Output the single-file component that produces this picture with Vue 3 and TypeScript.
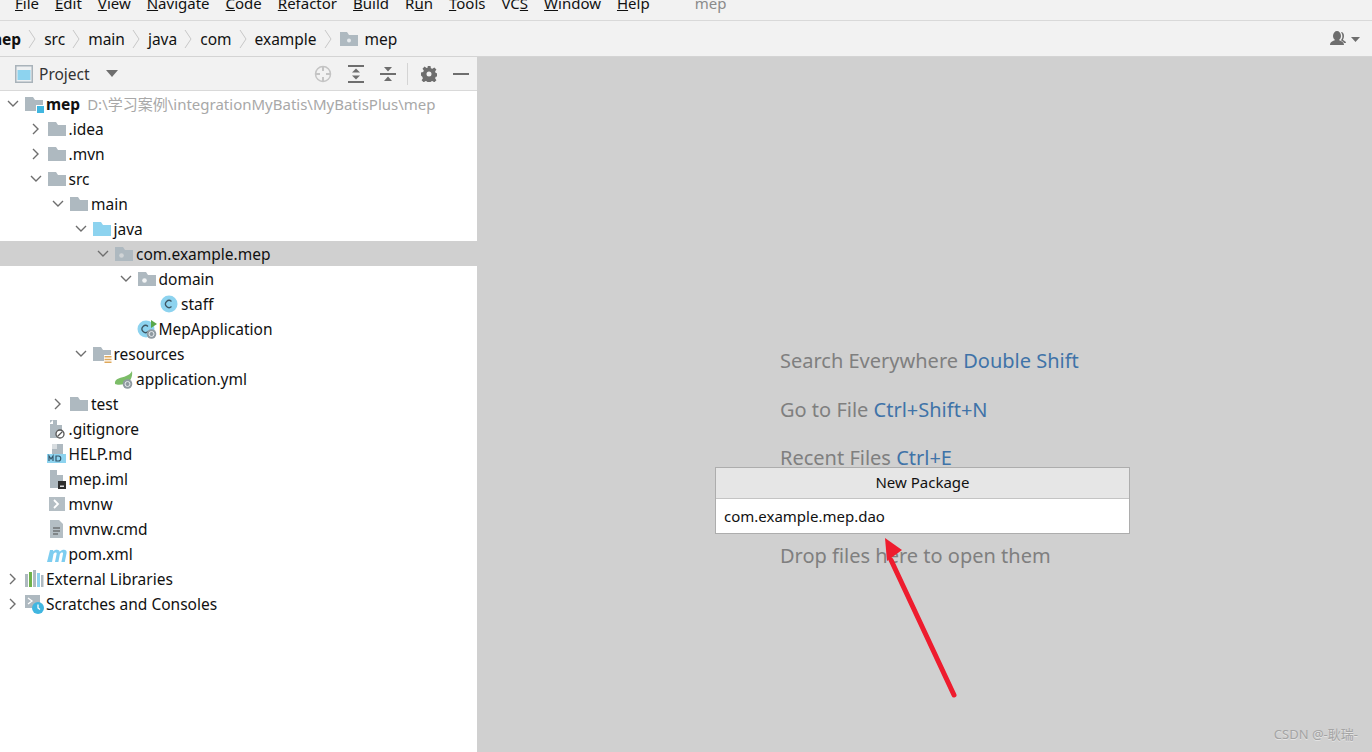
<script setup lang="ts">
type IconKind =
  | 'module' | 'folder' | 'source' | 'package' | 'cls' | 'app' | 'res' | 'yml'
  | 'ignore' | 'md' | 'iml' | 'shell' | 'cmd' | 'maven' | 'libs' | 'scratch';

interface Row {
  depth: number;
  label: string;
  icon: IconKind;
  open?: boolean;
  selected?: boolean;
  bold?: boolean;
  hint?: string;
}

const menus = [
  { pre: '', key: 'F', post: 'ile' },
  { pre: '', key: 'E', post: 'dit' },
  { pre: '', key: 'V', post: 'iew' },
  { pre: '', key: 'N', post: 'avigate' },
  { pre: '', key: 'C', post: 'ode' },
  { pre: '', key: 'R', post: 'efactor' },
  { pre: '', key: 'B', post: 'uild' },
  { pre: 'R', key: 'u', post: 'n' },
  { pre: '', key: 'T', post: 'ools' },
  { pre: 'VC', key: 'S', post: '' },
  { pre: '', key: 'W', post: 'indow' },
  { pre: '', key: 'H', post: 'elp' }
];

const crumbs = ['src', 'main', 'java', 'com', 'example'];

const rows: Row[] = [
  { depth: 0, label: 'mep', icon: 'module', open: true, bold: true, hint: 'D:\\学习案例\\integrationMyBatis\\MyBatisPlus\\mep' },
  { depth: 1, label: '.idea', icon: 'folder', open: false },
  { depth: 1, label: '.mvn', icon: 'folder', open: false },
  { depth: 1, label: 'src', icon: 'folder', open: true },
  { depth: 2, label: 'main', icon: 'folder', open: true },
  { depth: 3, label: 'java', icon: 'source', open: true },
  { depth: 4, label: 'com.example.mep', icon: 'package', open: true, selected: true },
  { depth: 5, label: 'domain', icon: 'package', open: true },
  { depth: 6, label: 'staff', icon: 'cls' },
  { depth: 5, label: 'MepApplication', icon: 'app' },
  { depth: 3, label: 'resources', icon: 'res', open: true },
  { depth: 4, label: 'application.yml', icon: 'yml' },
  { depth: 2, label: 'test', icon: 'folder', open: false },
  { depth: 1, label: '.gitignore', icon: 'ignore' },
  { depth: 1, label: 'HELP.md', icon: 'md' },
  { depth: 1, label: 'mep.iml', icon: 'iml' },
  { depth: 1, label: 'mvnw', icon: 'shell' },
  { depth: 1, label: 'mvnw.cmd', icon: 'cmd' },
  { depth: 1, label: 'pom.xml', icon: 'maven' },
  { depth: 0, label: 'External Libraries', icon: 'libs', open: false },
  { depth: 0, label: 'Scratches and Consoles', icon: 'scratch', open: false }
];

const hints = [
  { text: 'Search Everywhere', key: 'Double Shift' },
  { text: 'Go to File', key: 'Ctrl+Shift+N' },
  { text: 'Recent Files', key: 'Ctrl+E' },
  { text: 'Navigation Bar', key: 'Alt+Home' },
  { text: 'Drop files here to open them', key: '' }
];
</script>

<template>
  <div class="ide">
    <div class="menubar">
      <span v-for="m in menus" :key="m.key + m.post" class="menu">{{ m.pre }}<u>{{ m.key }}</u>{{ m.post }}</span>
      <span class="menu title">mep</span>
    </div>

    <div class="crumbs">
      <b class="crumb-root">mep</b>
      <template v-for="c in crumbs" :key="c">
        <svg class="sep" width="8" height="22" viewBox="0 0 8 22"><path d="M1 2l6 9-6 9" fill="none" stroke="#c8c8c8" stroke-width="1" /></svg>
        <span class="crumb">{{ c }}</span>
      </template>
      <svg class="sep" width="8" height="22" viewBox="0 0 8 22"><path d="M1 2l6 9-6 9" fill="none" stroke="#c8c8c8" stroke-width="1" /></svg>
      <svg class="crumb-icon" width="18" height="16" viewBox="0 0 18 16">
        <path d="M0 1h7l2 3h9v11H0z" fill="#aeb9c0" />
        <circle cx="9" cy="9.5" r="2" fill="#e6eaed" />
      </svg>
      <span class="crumb">mep</span>
      <span class="spacer"></span>
      <svg class="user" width="32" height="18" viewBox="0 0 32 18">
        <path d="M1 15c0-3 3-4 5-5-1-1-2-2-2-4 0-3 2-5 4-5s4 2 4 5c0 2-1 3-2 4 2 1 5 2 5 5z" fill="#6e6e6e" />
        <path d="M12 2c2 0 3 2 3 4s-1 3-1 4c1 1 3 1 3 3h-2c-1-2-3-2-3-3 1-1 2-3 1-6z" fill="#6e6e6e" />
        <path d="M22 7h9l-4.500 5z" fill="#6e6e6e" />
      </svg>
    </div>

    <div class="main">
      <aside class="sidebar">
        <div class="toolbar">
          <svg class="tool-window" width="18" height="18" viewBox="0 0 18 18">
            <rect width="18" height="18" fill="#a9b3ba" />
            <rect x="1.500" y="1.500" width="15" height="15" fill="#eef0f1" />
            <rect x="2.500" y="5" width="13" height="10" fill="#8dd3ef" />
          </svg>
          <span class="tool-title">Project</span>
          <svg class="tool-caret" width="12" height="7" viewBox="0 0 12 7"><path d="M0 0h12L6 7z" fill="#6e6e6e" /></svg>
          <span class="spacer"></span>
          <svg class="tool" width="18" height="18" viewBox="0 0 18 18" fill="none" stroke="#c4c4c4">
            <circle cx="9" cy="9" r="7.500" stroke-width="1.500" />
            <path d="M9 2v4M9 12v4M2 9h4M12 9h4" stroke-width="2" />
          </svg>
          <svg class="tool" width="16" height="18" viewBox="0 0 16 18" fill="#6e6e6e">
            <path d="M0 0h16v2H0zM0 16h16v2H0z" />
            <path d="M8 3.500l4 4H4zM8 14.500l-4-4h8z" />
          </svg>
          <svg class="tool" width="16" height="18" viewBox="0 0 16 18" fill="#6e6e6e">
            <path d="M0 8h16v2H0z" />
            <path d="M8 6.500l-4-4.500h8zM8 11.500l4 4.500H4z" />
          </svg>
          <span class="tool-divider"></span>
          <svg class="tool" width="16" height="16" viewBox="0 0 16 16">
            <path fill="#6e6e6e" fill-rule="evenodd" d="M6.500 0h3l.4 2.200 1.500.6 1.900-1.300 2.100 2.100-1.300 1.900.6 1.500 2.300.4v3l-2.300.4-.6 1.500 1.300 1.900-2.100 2.100-1.900-1.300-1.500.6-.4 2.300h-3l-.4-2.300-1.500-.6-1.900 1.300-2.100-2.100 1.300-1.900-.6-1.500L0 9.500v-3l2.200-.4.6-1.500L1.500 2.700l2.100-2.100 1.900 1.300 1.500-.6zM8 5.500a2.500 2.500 0 100 5 2.500 2.500 0 000-5z" />
          </svg>
          <svg class="tool last" width="16" height="2" viewBox="0 0 16 2"><rect width="16" height="2" fill="#6e6e6e" /></svg>
        </div>

        <ul class="tree">
          <li
            v-for="r in rows"
            :key="r.label + r.depth"
            class="row"
            :class="{ selected: r.selected }"
            :style="{ paddingLeft: `${6 + r.depth * 22.5}px` }"
          >
            <span class="chev">
              <svg v-if="r.open === true" width="12" height="8" viewBox="0 0 12 8"><path d="M1 1l5 5 5-5" fill="none" stroke="#6e6e6e" stroke-width="1.400" /></svg>
              <svg v-else-if="r.open === false" width="8" height="12" viewBox="0 0 8 12"><path d="M1 1l5 5-5 5" fill="none" stroke="#6e6e6e" stroke-width="1.400" /></svg>
            </span>
            <span class="icon">
              <svg width="20" height="20" viewBox="0 0 20 20">
                <template v-if="r.icon === 'module'">
                  <path d="M1 3h8l2 3h8v11H1z" fill="#aeb9c0" />
                  <rect x="12" y="11" width="8" height="8" fill="#fff" />
                  <rect x="13" y="12" width="7" height="7" fill="#40b6e0" />
                </template>
                <path v-else-if="r.icon === 'folder'" d="M1 3h8l2 3h8v11H1z" fill="#aeb9c0" />
                <path v-else-if="r.icon === 'source'" d="M1 3h8l2 3h8v11H1z" fill="#8dd3ef" />
                <template v-else-if="r.icon === 'package'">
                  <path d="M1 3h8l2 3h8v11H1z" fill="#aeb9c0" />
                  <circle cx="7.500" cy="11.500" r="2.300" :fill="r.selected ? '#d0d4d6' : '#f2f4f5'" />
                </template>
                <template v-else-if="r.icon === 'cls'">
                  <circle cx="10" cy="10" r="8.500" fill="#8dd3ef" />
                  <path d="M12.500 7.500a3.500 3.500 0 100 5" fill="none" stroke="#3e5663" stroke-width="1.300" />
                </template>
                <template v-else-if="r.icon === 'app'">
                  <circle cx="9" cy="10" r="8.500" fill="#8dd3ef" />
                  <path d="M11 7.500a3.500 3.500 0 100 5" fill="none" stroke="#3e5663" stroke-width="1.300" />
                  <path d="M14 1l6 4-6 4z" fill="#59a84b" />
                  <circle cx="14.500" cy="15" r="4.800" fill="#8f9aa1" />
                  <circle cx="14.500" cy="15" r="2.500" fill="none" stroke="#e8ecee" stroke-width="1" />
                </template>
                <template v-else-if="r.icon === 'res'">
                  <path d="M1 3h8l2 3h8v11H1z" fill="#aeb9c0" />
                  <rect x="12" y="11" width="8" height="9" fill="#fff" />
                  <path d="M12.500 12h7v1.500h-7zM12.500 14.800h7v1.500h-7zM12.500 17.600h7v1.500h-7z" fill="#dfa85a" />
                </template>
                <template v-else-if="r.icon === 'yml'">
                  <path d="M1 15C0 9 8 9 12 7c3-1 5-3 6-5 1 6-2 12-8 13-3 1-7 1-9 0z" fill="#7cbd68" />
                  <circle cx="13.500" cy="15" r="4.800" fill="#8f9aa1" />
                  <circle cx="13.500" cy="15" r="2.500" fill="none" stroke="#e8ecee" stroke-width="1" />
                </template>
                <template v-else-if="r.icon === 'ignore'">
                  <path d="M3 1h7v5h5v13H3z" fill="#aeb9c0" />
                  <path d="M6 1l0 4H2z" fill="#fff" />
                  <circle cx="13" cy="15" r="4" fill="#fff" stroke="#555" stroke-width="1.300" />
                  <path d="M10.500 17.500l5-5" stroke="#555" stroke-width="1.300" />
                </template>
                <template v-else-if="r.icon === 'md'">
                  <path d="M5 0h5v10H5z" fill="#aeb9c0" />
                  <path d="M10 0h6v10h-6z" fill="#aeb9c0" />
                  <path d="M5 0l-0 5H10V0z" fill="#d8dde0" />
                  <rect x="0" y="10" width="19" height="9" fill="#8dd3ef" />
                  <path d="M2 17v-5l2 3 2-3v5M9 12v5h2.500c3 0 3-5 0-5z" fill="none" stroke="#35566a" stroke-width="1.200" />
                </template>
                <template v-else-if="r.icon === 'iml'">
                  <path d="M3 1h7v5h6v13H3z" fill="#aeb9c0" />
                  <rect x="11" y="12" width="8" height="8" fill="#2f2f2f" />
                  <rect x="13" y="16.500" width="4" height="1.500" fill="#ddd" />
                </template>
                <template v-else-if="r.icon === 'shell'">
                  <rect x="2" y="3" width="16" height="14" fill="#b4bec4" />
                  <path d="M7 6l4 4-4 4" fill="none" stroke="#fff" stroke-width="1.800" />
                </template>
                <template v-else-if="r.icon === 'cmd'">
                  <path d="M3 1h9l4 4v14H3z" fill="#b4bec4" />
                  <path d="M6 9h7M6 12h7M6 15h5" stroke="#4c4c4c" stroke-width="1.100" />
                </template>
                <path
                  v-else-if="r.icon === 'maven'"
                  d="M0 18L3 6h3.200l-.3 1.600C7 6.300 8.500 5.700 10 5.700c1.500 0 2.500.7 2.800 2C14 6.300 15.600 5.700 17 5.700c2 0 3 1.300 2.600 3.400L17.800 18h-3.400l1.600-8c.2-1-.1-1.500-.9-1.500-.9 0-1.800.6-2.200 1.600L11.400 18H8l1.600-8c.2-1-.1-1.500-.9-1.500-.9 0-1.800.6-2.200 1.600L5 18z"
                  fill="#7dcdf0"
                />
                <template v-else-if="r.icon === 'libs'">
                  <rect x="1" y="5" width="3" height="13" fill="#aeb9c0" />
                  <rect x="5" y="3" width="3" height="15" fill="#6fb24c" />
                  <rect x="9" y="1" width="3" height="17" fill="#aeb9c0" />
                  <rect x="13" y="4" width="3" height="14" fill="#8dd3ef" />
                  <rect x="17" y="6" width="2.500" height="12" fill="#aeb9c0" />
                </template>
                <template v-else-if="r.icon === 'scratch'">
                  <rect x="1" y="1" width="15" height="13" fill="#aeb9c0" />
                  <path d="M4 4l4 3-4 3" fill="none" stroke="#fff" stroke-width="1.300" />
                  <circle cx="14" cy="14" r="6" fill="#40b6e0" />
                  <path d="M14 10.500V14l2 1.500" fill="none" stroke="#fff" stroke-width="1.300" />
                </template>
              </svg>
            </span>
            <span class="label" :class="{ bold: r.bold }">{{ r.label }}</span>
            <span v-if="r.hint" class="path">{{ r.hint }}</span>
          </li>
        </ul>
      </aside>

      <section class="editor">
        <div class="hints">
          <p v-for="h in hints" :key="h.text">{{ h.text }} <em v-if="h.key">{{ h.key }}</em></p>
        </div>

        <div class="popup">
          <div class="popup-title">New Package</div>
          <div class="popup-input">com.example.mep.dao</div>
        </div>

        <svg class="arrow" width="90" height="170" viewBox="0 0 90 170">
          <path d="M76 157L13 22" fill="none" stroke="#ee1c2e" stroke-width="5" stroke-linecap="round" />
          <path d="M7 0L9 23 24 12z" fill="#ee1c2e" />
        </svg>

        <span class="watermark">CSDN @-耿瑞-</span>
      </section>
    </div>
  </div>
</template>

<style>
html, body { margin: 0; overflow: hidden; }
</style>

<style scoped>
.ide {
  width: 1372px;
  height: 752px;
  display: flex;
  flex-direction: column;
  overflow: hidden;
  background: #f2f2f2;
  color: #111;
  font-family: "Noto Sans", "Noto Sans CJK SC", sans-serif;
}

.spacer {
  flex: 1;
}

.menubar {
  height: 20px;
  flex-shrink: 0;
  display: flex;
  gap: 16px;
  padding-left: 15px;
  border-bottom: 1px solid #d9d9d9;
  overflow: hidden;
  font-size: 15px;
  line-height: 20px;
}

.menu {
  margin-top: -7px;
  height: 20px;
}

.menu.title {
  margin-left: 29px;
  color: #8a8a8a;
}

.crumbs {
  height: 35px;
  flex-shrink: 0;
  display: flex;
  align-items: center;
  border-bottom: 1px solid #d4d4d4;
  overflow: hidden;
  font-size: 15.500px;
}

.crumb-root {
  margin-left: -13px;
}

.sep {
  margin: 0 8px 0 7px;
}

.crumb-icon {
  margin-right: 7px;
}

.user {
  margin-right: 11px;
}

.main {
  flex: 1;
  display: flex;
  min-height: 0;
}

.sidebar {
  width: 477px;
  flex-shrink: 0;
  display: flex;
  flex-direction: column;
  background: #fff;
}

.toolbar {
  height: 33px;
  flex-shrink: 0;
  display: flex;
  align-items: center;
  padding-left: 15px;
  background: #f2f2f2;
  border-bottom: 1px solid #d9d9d9;
  font-size: 15.500px;
}

.tool-title {
  margin-left: 6px;
  color: #333;
}

.tool-caret {
  margin-left: 16px;
}

.tool {
  margin-left: 16px;
}

.tool-divider {
  width: 1px;
  height: 22px;
  margin-left: 11px;
  background: #d4d4d4;
}

.tool + .tool-divider + .tool {
  margin-left: 13px;
}

.tool.last {
  margin-left: 16px;
  margin-right: 8px;
}

.tree {
  list-style: none;
  margin: 0;
  padding: 0;
}

.row {
  height: 25px;
  display: flex;
  align-items: center;
  font-size: 15.500px;
  white-space: nowrap;
}

.row.selected {
  background: #d0d0d0;
}

.chev {
  width: 14px;
  margin-right: 4px;
  flex-shrink: 0;
  display: flex;
  justify-content: center;
  align-items: center;
}

.icon {
  width: 20px;
  height: 20px;
  margin-right: 2px;
  flex-shrink: 0;
}

.icon svg {
  display: block;
}

.label.bold {
  font-weight: 700;
}

.path {
  margin-left: 7px;
  color: #a8a8a8;
  font-size: 15px;
}

.editor {
  position: relative;
  flex: 1;
  background: #d0d0d0;
}

.hints {
  padding: 289px 0 0 303px;
}

.hints p {
  margin: 0;
  height: 48.700px;
  line-height: 30px;
  font-size: 20px;
  color: #7f7f7f;
}

.hints em {
  font-style: normal;
  color: #3f73a8;
}

.popup {
  position: absolute;
  left: 238px;
  top: 410px;
  width: 413px;
  border: 1px solid #adadad;
  font-size: 15px;
}

.popup-title {
  height: 30px;
  line-height: 29px;
  text-align: center;
  background: #e6e6e6;
  border-bottom: 1px solid #c4c4c4;
}

.popup-input {
  height: 34px;
  line-height: 34px;
  padding-left: 8px;
  background: #fff;
}

.arrow {
  position: absolute;
  left: 401px;
  top: 481px;
}

.watermark {
  position: absolute;
  right: 14px;
  bottom: 9px;
  font-size: 13px;
  color: #a4a4a4;
  text-shadow: 0 1px 0 #e4e4e4;
}
</style>
